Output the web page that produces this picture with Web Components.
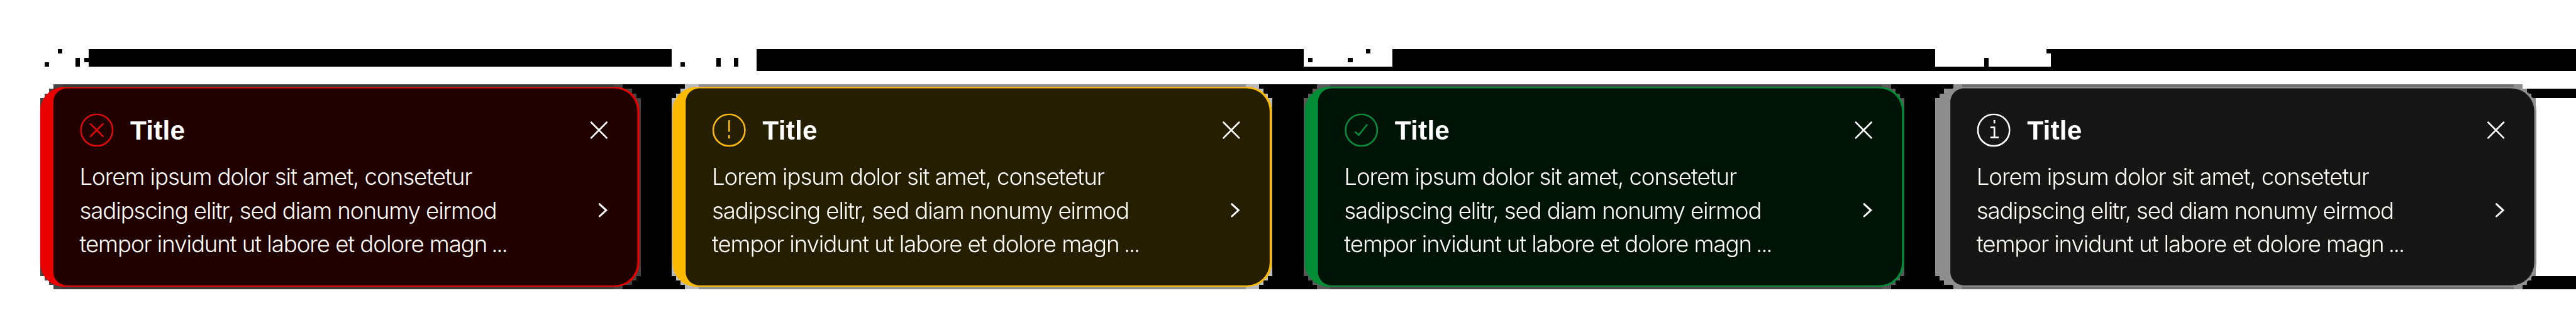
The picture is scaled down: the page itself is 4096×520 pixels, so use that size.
<!DOCTYPE html>
<html lang="en">
<head>
<meta charset="utf-8">
<title>Notifications</title>
<style>
html,body{margin:0;padding:0;background:#fff;width:4096px;height:520px;overflow:hidden}
</style>
</head>
<body>
<notice-board>
  <notice-card kind="error">Title</notice-card>
  <notice-card kind="warning">Title</notice-card>
  <notice-card kind="success">Title</notice-card>
  <notice-card kind="info">Title</notice-card>
</notice-board>

<template id="board">
<style>
:host{display:block;width:4096px;height:520px;overflow:hidden;position:relative}
.stage{width:4632px;height:588px;transform:scale(.88428,.88435);transform-origin:0 0;position:relative}
.backdrop{position:absolute;left:0;top:0;display:block}
.row{position:relative;display:flex;gap:59.5px;padding:156px 72px 0}
</style>
<div class="stage">
<svg class="backdrop" width="4632" height="588" viewBox="0 0 4632 588" shape-rendering="crispEdges">
  <path fill="#000" d="M80 112h8v8h-8zM104 88h8v8h-8zM136 104h8v16h-8zM152 104h8v8h-8zM160 88H1208V120H160zM1224 112h8v8h-8zM1288 104h8v16h-8zM1320 104h8v16h-8zM1360 88H2344V120H2504V88H3480V120H3568V104H3576V120H3688V96H3680V88H4632V128H1360zM2352 104h8v8h-8zM2424 104h8v8h-8zM2456 88h8v8h-8z"/>
  <path fill="#000" d="M1112 152H4536V160H4632V176H4540V496H4632V520H1112z"/>
  <path fill="#444443" d="M96 152H1120V160H1136V168H1144V176H1152V496H1144V504H1136V512H1120V520H96V512H88V504H80V496H72V176H80V168H88V160H96z"/>
  <path fill="#3c3b39" d="M112 152H1104V160H112zM112 512H1104V520H112zM1144 192H1152V480H1144z"/>
  <path fill="#bababa" d="M1232 152H2264V160H2272V168H2280V176H2288V496H2280V504H2272V512H2264V520H1232V512H1224V504H1216V496H1208V176H1216V168H1224V160H1232z"/>
  <path fill="#909090" d="M1256 152H2240V160H1256zM1256 512H2240V520H1256zM2280 192H2288V480H2280z"/>
  <path fill="#5a5858" d="M2368 152H3400V160H3408V168H3416V176H3424V496H3416V504H3408V512H3400V520H2368V512H2360V504H2352V496H2344V176H2352V168H2360V160H2368z"/>
  <path fill="#484647" d="M2392 152H3384V160H2392zM2392 512H3384V520H2392zM3416 192H3424V480H3416z"/>
  <path fill="#8e8e8e" d="M3512 152H4536V160H4544V168H4552V176H4560V496H4552V504H4544V512H4536V520H3512V512H3496V504H3488V496H3480V176H3488V168H3496V160H3512z"/>
  <path fill="#707070" d="M3528 152H4520V160H3528zM3528 512H4520V520H3528z"/>
</svg>
<div class="row"><slot></slot></div>
</div>
</template>

<template id="card">
<style>
:host{display:block;flex:none;box-sizing:border-box;width:1077.5px;height:360px;border-radius:44px;padding:3px 3.5px 3px 24px;color:#fff;
 background:linear-gradient(var(--edge),var(--edge)) 44px 0/989px 3px no-repeat,linear-gradient(var(--edge),var(--edge)) 44px 357px/989px 3px no-repeat,var(--accent)}
:host([kind=error]){--accent:#eb0000;--edge:#cb0d0d;--ink:#dc0a0a;--fill:#210000}
:host([kind=warning]){--accent:#fcbb00;--edge:#efb51c;--ink:#f8ba10;--fill:#261e00}
:host([kind=success]){--accent:#008d36;--edge:#10843c;--ink:#0b8a3c;--fill:#001307}
:host([kind=info]){--accent:#8e8e8e;--edge:#8b8b8b;--ink:#fff;--fill:#161616}
.body{box-sizing:border-box;width:1050px;height:354px;border-radius:24px 41px 41px 24px;background:var(--fill);padding:45px 51px 0 48px;display:flex;flex-direction:column;gap:24px}
header{display:flex;align-items:center;height:60px}
h2{margin:0 auto 0 30px;font:700 48px/60px "Liberation Sans",Arial,sans-serif;letter-spacing:.2px;position:relative;top:1px}
.main{display:flex;align-items:center;justify-content:space-between}
.text{font:300 41.5px/60px Inter,"Liberation Sans",sans-serif;color:#fffdfa;margin-left:-1px}
.line{display:block;width:max-content;white-space:pre}
.dots{letter-spacing:-2.6px;margin-left:-1px}
svg{display:block;flex:none;fill:none;stroke:#fff;stroke-width:3}
.icon{stroke:var(--ink)}
</style>
<div class="body">
  <header>
    <svg class="icon" width="60" height="60" viewBox="0 0 60 60"><circle cx="30" cy="30" r="28.5"/><path class="glyph"/></svg>
    <h2><slot></slot></h2>
    <svg width="36" height="36" viewBox="0 0 36 36" stroke-linecap="round"><path d="M4 4 32 32M32 4 4 32"/></svg>
  </header>
  <div class="main">
    <div class="text"><span class="line" data-w="706">Lorem ipsum dolor sit amet, consetetur</span><span class="line" data-w="749.5">sadipscing elitr, sed diam nonumy eirmod</span><span class="line" data-w="768">tempor invidunt ut labore et dolore magn<span class="dots"> ...</span></span></div>
    <svg width="36" height="36" viewBox="0 0 36 36" stroke-linecap="round"><path d="M19 7 31 18 19 29" stroke-width="3.4"/></svg>
  </div>
</div>
</template>

<script>
const glyphs={
  error:'M18 18 42 42M42 18 18 42',
  warning:'M30 12V33M30 39V45',
  success:'M18.3 32.8 25.3 38.6 40.6 19.6',
  info:'M31.2 12V18M24 25.2H31.2V43.2M24 43.2H39'
};
class NoticeBoard extends HTMLElement{
  constructor(){super();this.attachShadow({mode:'open'}).append(document.getElementById('board').content.cloneNode(true));}
}
class NoticeCard extends HTMLElement{
  constructor(){super();this.attachShadow({mode:'open'}).append(document.getElementById('card').content.cloneNode(true));}
  connectedCallback(){
    this.shadowRoot.querySelector('.glyph').setAttribute('d',glyphs[this.getAttribute('kind')]);
    // Tracks each line out to its set measure; the ellipsis keeps its own tight tracking.
    for(const l of this.shadowRoot.querySelectorAll('.line')){
      l.style.letterSpacing=(l.dataset.w-l.offsetWidth)/l.firstChild.data.length+'px';
    }
  }
}
customElements.define('notice-board',NoticeBoard);
customElements.define('notice-card',NoticeCard);
</script>
</body>
</html>
